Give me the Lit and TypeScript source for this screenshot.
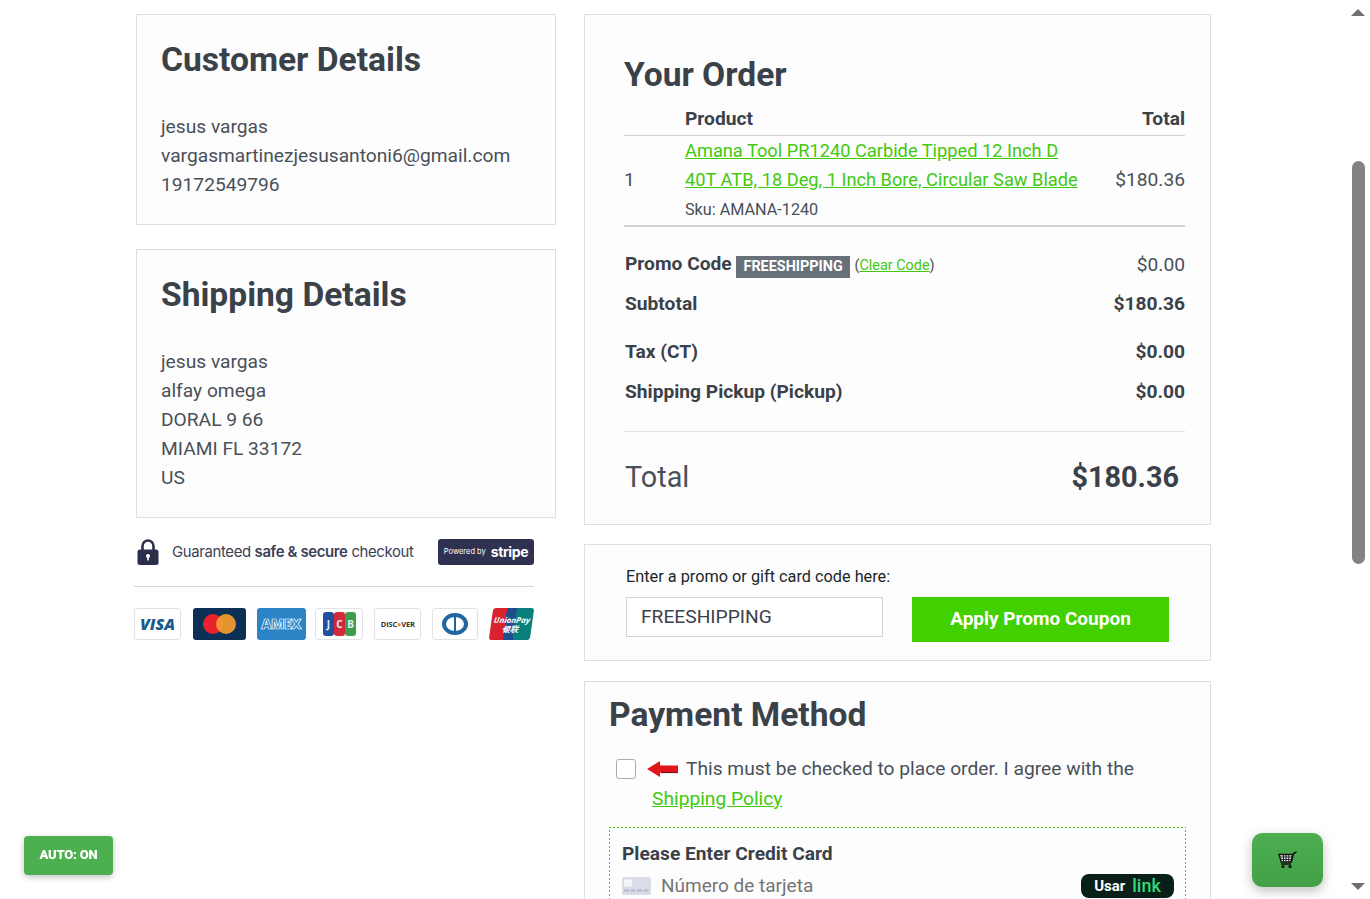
import { css, html, LitElement, svg } from 'lit';
import { customElement } from 'lit/decorators.js';

const customerLines = ['jesus vargas', 'vargasmartinezjesusantoni6@gmail.com', '19172549796'];
const shippingLines = ['jesus vargas', 'alfay omega', 'DORAL 9 66', 'MIAMI FL 33172', 'US'];

const lockIcon = svg`<svg width="24" height="28" viewBox="0 0 24 28">
  <path d="M6.5 13V8a5.5 5.5 0 0 1 11 0v5" fill="none" stroke="#2b2f4c" stroke-width="2.6"/>
  <rect x="1.500" y="11.500" width="21" height="15.500" rx="2.500" fill="#2b2f4c"/>
  <circle cx="12" cy="18" r="2" fill="#fff"/><rect x="11.200" y="18.500" width="1.600" height="4" fill="#fff"/>
</svg>`;

const cartIcon = svg`<svg width="20" height="18" viewBox="0 0 20 18">
  <path d="M1 3.500h13.500l-1.300 7.500H3.300z" fill="#eee" stroke="#111" stroke-width="1.400"/>
  <path d="M2 6h12M2.500 8.500h11M5.500 4v7M8 4v7M10.800 4v7" stroke="#111" stroke-width=".9"/>
  <path d="M13.200 11 15.500 2.500 18.500 1" fill="none" stroke="#111" stroke-width="1.500"/>
  <path d="M3 13h10" stroke="#111" stroke-width="1.500"/>
  <circle cx="5" cy="15.500" r="1.600" fill="#111"/><circle cx="12" cy="15.500" r="1.600" fill="#111"/>
</svg>`;

const arrowIcon = svg`<svg width="31" height="18" viewBox="0 0 31 18">
  <path d="M0 9 13 1v4.500h18v7H13V17z" fill="#e2141c"/>
  <path d="M14 12.500h17" stroke="#7c1015" stroke-width="1.200"/>
</svg>`;

const cardIcon = svg`<svg width="29" height="18" viewBox="0 0 29 18">
  <rect width="29" height="18" rx="1.500" fill="#d9dde8"/>
  <rect x="2" y="2.500" width="8" height="7" fill="#f2f4f8"/>
  <path d="M2 13.500h25" stroke="#b3b9c9" stroke-width="2" stroke-dasharray="5 1.500"/>
</svg>`;

@customElement('app-root')
export class AppRoot extends LitElement {
  static override styles = css`
    :host {
      display: block;
      height: 899px;
      overflow: hidden;
      background: #fff;
      font-family: Roboto, sans-serif;
      font-size: 19.200px;
      line-height: 28.800px;
      color: #495057;
    }
    a {
      color: #41c90e;
      text-decoration: underline;
    }
    h2 {
      margin: 0;
      font-size: 33.600px;
      line-height: 38px;
      font-weight: 700;
      color: #3b4148;
    }
    .page {
      display: flex;
      gap: 28px;
      padding: 14px 0 0 136px;
    }
    .left {
      width: 420px;
      display: flex;
      flex-direction: column;
      gap: 24px;
    }
    .right {
      width: 627px;
      display: flex;
      flex-direction: column;
    }
    .card {
      box-sizing: border-box;
      border: 1px solid #dcdfe3;
      background: #fdfdfe;
    }
    .details {
      padding: 26px 24px 25px;
    }
    .details h2 {
      margin-bottom: 34px;
    }
    .trust {
      width: 400px;
      margin: -7px 0 0 -2px;
    }
    .secure {
      display: flex;
      align-items: center;
      height: 28px;
      margin-top: 3px;
      padding-bottom: 20px;
      border-bottom: 1px solid #d5d7da;
      color: #3c3f55;
      font-family: Inter, sans-serif;
      font-size: 14.900px;
      letter-spacing: -0.35px;
    }
    .secure svg {
      margin: 0 12px 0 2px;
    }
    .secure b {
      font-weight: 600;
    }
    .stripe {
      margin-left: auto;
      width: 96px;
      height: 26px;
      display: flex;
      align-items: center;
      justify-content: center;
      gap: 5px;
      border-radius: 3px;
      background: #2f3150;
      color: #fff;
      font-size: 7.500px;
      letter-spacing: 0;
    }
    .stripe b {
      font-size: 14px;
      font-weight: 700;
      letter-spacing: -0.4px;
    }
    .brands {
      display: flex;
      justify-content: space-between;
      margin-top: 21px;
    }
    .brand {
      box-sizing: border-box;
      height: 32px;
      display: flex;
      align-items: center;
      justify-content: center;
      border: 1px solid #e0e2e6;
      border-radius: 3px;
      background: #fff;
      font-family: 'Open Sans', sans-serif;
    }
    .visa {
      width: 47px;
      color: #1a5a8e;
      font-size: 16px;
      font-weight: 800;
      font-style: italic;
    }
    .mc {
      width: 53px;
      margin-left: 1px;
      border: 0;
      background: #0b2f55;
    }
    .mc i {
      width: 20px;
      height: 20px;
      border-radius: 50%;
      background: #e8232c;
    }
    .mc i + i {
      margin-left: -7px;
      background: #f59e2c;
      opacity: 0.92;
    }
    .amex {
      width: 49px;
      border: 0;
      background: #2b84c6;
      color: #2b84c6;
      -webkit-text-stroke: 0.7px #fff;
      font-size: 14px;
      font-weight: 800;
      letter-spacing: -0.4px;
    }
    .jcb {
      width: 48px;
      margin-left: -1px;
      color: #e6eef5;
      font-size: 10px;
      font-weight: 700;
    }
    .jcb span {
      width: 11px;
      height: 24px;
      border-radius: 3px;
      line-height: 24px;
      text-align: center;
    }
    .jcb span:nth-child(1) { background: #20509e; }
    .jcb span:nth-child(2) { background: #d3283a; }
    .jcb span:nth-child(3) { background: #3b9f4a; }
    .discover {
      width: 47px;
      color: #333;
      font-size: 7.500px;
      font-weight: 700;
      letter-spacing: -0.2px;
    }
    .discover em {
      color: #f08a24;
      font-style: normal;
    }
    .diners {
      width: 46px;
    }
    .diners i {
      box-sizing: border-box;
      width: 26px;
      height: 22px;
      border: 4px solid #21669e;
      border-radius: 50%;
      background: linear-gradient(90deg, #fff 44%, #21669e 44% 56%, #fff 56%);
    }
    .union {
      width: 41px;
      margin: 0 2px;
      border: 0;
      color: #fff;
      font-size: 8px;
      line-height: 9px;
      font-weight: 700;
      font-style: italic;
      text-align: center;
      transform: skewX(-8deg);
      background: linear-gradient(90deg, #d8232f 0 34%, #1d4e8e 34% 58%, #087f7a 58%);
    }
    .order {
      height: 511px;
      padding: 41px 25px 0 39px;
    }
    .table-head {
      display: grid;
      grid-template-columns: 61px 1fr auto;
      align-items: center;
      box-sizing: border-box;
      height: 35px;
      margin-top: 7px;
      padding-top: 3px;
      border-bottom: 1px solid #cfd2d6;
      font-weight: 700;
      color: #3b4148;
    }
    .item {
      display: grid;
      grid-template-columns: 61px 1fr auto;
      align-items: center;
      height: 89px;
      border-bottom: 2px solid #cfd2d6;
    }
    .item a {
      font-size: 18.240px;
      line-height: 29px;
    }
    .links {
      margin-top: -2px;
      line-height: 29px;
    }
    .sku {
      margin-top: 1px;
      font-size: 16.200px;
      line-height: 29px;
    }
    .summary {
      display: flex;
      justify-content: space-between;
      align-items: center;
      height: 39px;
      padding-left: 1px;
    }
    .summary > span:first-child,
    .summary.strong {
      font-weight: 700;
      color: #3b4148;
    }
    .promo-row {
      margin: 19px 0 0;
    }
    .tag {
      display: inline-block;
      padding: 0 7px;
      background: #68717a;
      color: #fff;
      font-size: 14.400px;
      line-height: 22px;
      font-weight: 700;
      vertical-align: -1px;
    }
    .clear {
      font-size: 14.400px;
      font-weight: 400;
      color: #495057;
    }
    .tax {
      margin-top: 9px;
    }
    .shipping {
      margin-top: 1px;
    }
    .rule {
      height: 1px;
      margin-top: 19px;
      background: #dfe2e5;
    }
    .total {
      display: flex;
      justify-content: space-between;
      align-items: center;
      height: 90px;
      padding: 0 6px 0 1px;
      font-size: 28.800px;
    }
    .total b {
      color: #3b4148;
    }
    .promo {
      height: 117px;
      margin-top: 19px;
      padding: 18px 0 0 41px;
      font-size: 16.300px;
      color: #212529;
    }
    .promo-form {
      display: flex;
      align-items: flex-start;
      gap: 29px;
      margin-top: 5px;
    }
    .promo-input {
      box-sizing: border-box;
      width: 257px;
      height: 40px;
      padding: 0 14px;
      border: 1px solid #ced4da;
      background: #fff;
      color: #3b4148;
      font: 19.200px Roboto, sans-serif;
    }
    .promo-button {
      width: 257px;
      height: 45px;
      padding: 0 0 2px;
      border: 0;
      background: #42d000;
      color: #fff;
      font: 700 19px Roboto, sans-serif;
    }
    .payment {
      height: 260px;
      margin-top: 20px;
      padding: 14px 24px 0 24px;
    }
    .agree {
      display: flex;
      align-items: center;
      height: 30px;
      margin-top: 20px;
    }
    .check {
      box-sizing: border-box;
      width: 20px;
      height: 20px;
      margin: 0 11px 0 7px;
      border: 1px solid #a8adb2;
      border-radius: 3px;
      background: #fff;
    }
    .agree svg {
      margin-right: 8px;
    }
    .policy {
      height: 30px;
      padding-left: 43px;
      line-height: 30px;
    }
    .cc {
      --dash: #41d010;
      height: 120px;
      margin-top: 13px;
      padding: 13px 13px 0;
      background:
        repeating-linear-gradient(90deg, var(--dash) 0 2px, transparent 2px 4px) top / 100% 1px no-repeat,
        repeating-linear-gradient(0deg, var(--dash) 0 2px, transparent 2px 4px) left / 1px 100% no-repeat,
        repeating-linear-gradient(0deg, var(--dash) 0 2px, transparent 2px 4px) right / 1px 100% no-repeat;
    }
    .cc-title {
      font-weight: 700;
      line-height: 28px;
      color: #3b4148;
    }
    .cc-field {
      display: flex;
      align-items: center;
      gap: 10px;
      height: 26px;
      margin-top: 5px;
      color: #757575;
      font-size: 19px;
    }
    .usar {
      margin: 0 -1px 0 auto;
      width: 93px;
      height: 24px;
      display: flex;
      align-items: center;
      justify-content: center;
      gap: 7px;
      border-radius: 8px;
      background: #0a1f17;
      color: #fff;
      font-size: 15px;
      font-weight: 700;
    }
    .usar span {
      color: #33d97a;
      font-size: 18px;
      font-weight: 500;
    }
    .auto {
      position: fixed;
      left: 24px;
      top: 836px;
      width: 89px;
      height: 39px;
      display: flex;
      align-items: center;
      justify-content: center;
      border-radius: 4px;
      background: #4caf50;
      box-shadow: 0 2px 6px rgba(0, 0, 0, 0.25);
      color: #fff;
      font-size: 13px;
      font-weight: 900;
      letter-spacing: -0.2px;
    }
    .cart {
      position: fixed;
      left: 1252px;
      top: 833px;
      width: 71px;
      height: 54px;
      display: flex;
      align-items: center;
      justify-content: center;
      border-radius: 10px;
      background: linear-gradient(180deg, #4caf50, #43a047);
      box-shadow: 0 4px 12px rgba(0, 0, 0, 0.25);
    }
    .scrollbar {
      position: fixed;
      top: 0;
      right: 0;
      width: 17px;
      height: 899px;
      background: #fff;
    }
    .thumb {
      position: absolute;
      left: -1px;
      top: 161px;
      width: 13px;
      height: 403px;
      border-radius: 7px;
      background: #838383;
    }
    .up, .down {
      position: absolute;
      left: -2px;
      width: 0;
      height: 0;
      border-left: 7px solid transparent;
      border-right: 7px solid transparent;
    }
    .up {
      top: 9px;
      border-bottom: 7px solid #6f6f6f;
    }
    .down {
      top: 883px;
      border-top: 7px solid #6f6f6f;
    }
  `;

  override render() {
    return html`
      <div class="page">
        <div class="left">
          <section class="card details">
            <h2>Customer Details</h2>
            ${customerLines.map((l) => html`<div>${l}</div>`)}
          </section>
          <section class="card details">
            <h2>Shipping Details</h2>
            ${shippingLines.map((l) => html`<div>${l}</div>`)}
          </section>
          <div class="trust">
            <div class="secure">
              ${lockIcon}
              <span>Guaranteed <b>safe &amp; secure</b> checkout</span>
              <div class="stripe">Powered by <b>stripe</b></div>
            </div>
            <div class="brands">
              <div class="brand visa">VISA</div>
              <div class="brand mc"><i></i><i></i></div>
              <div class="brand amex">AMEX</div>
              <div class="brand jcb"><span>J</span><span>C</span><span>B</span></div>
              <div class="brand discover">DISC<em>●</em>VER</div>
              <div class="brand diners"><i></i></div>
              <div class="brand union">UnionPay<br />银联</div>
            </div>
          </div>
        </div>

        <div class="right">
          <section class="card order">
            <h2>Your Order</h2>
            <div class="table-head"><span></span><span>Product</span><span>Total</span></div>
            <div class="item">
              <span>1</span>
              <div class="links">
                <a href="#">Amana Tool PR1240 Carbide Tipped 12 Inch D<br />40T ATB, 18 Deg, 1 Inch Bore, Circular Saw Blade</a>
                <div class="sku">Sku: AMANA-1240</div>
              </div>
              <span>$180.36</span>
            </div>
            <div class="summary promo-row">
              <span>Promo Code <span class="tag">FREESHIPPING</span> <span class="clear">(<a href="#">Clear Code</a>)</span></span>
              <span>$0.00</span>
            </div>
            <div class="summary strong"><span>Subtotal</span><span>$180.36</span></div>
            <div class="summary strong tax"><span>Tax (CT)</span><span>$0.00</span></div>
            <div class="summary strong shipping"><span>Shipping Pickup (Pickup)</span><span>$0.00</span></div>
            <div class="rule"></div>
            <div class="total"><span>Total</span><b>$180.36</b></div>
          </section>

          <section class="card promo">
            <div>Enter a promo or gift card code here:</div>
            <div class="promo-form">
              <input class="promo-input" .value=${'FREESHIPPING'} />
              <button class="promo-button">Apply Promo Coupon</button>
            </div>
          </section>

          <section class="card payment">
            <h2>Payment Method</h2>
            <div class="agree">
              <div class="check"></div>
              ${arrowIcon}
              <span>This must be checked to place order. I agree with the</span>
            </div>
            <div class="policy"><a href="#">Shipping Policy</a></div>
            <div class="cc">
              <div class="cc-title">Please Enter Credit Card</div>
              <div class="cc-field">
                ${cardIcon}
                <span>Número de tarjeta</span>
                <div class="usar">Usar <span>link</span></div>
              </div>
            </div>
          </section>
        </div>
      </div>

      <div class="auto">AUTO: ON</div>
      <div class="cart">${cartIcon}</div>
      <div class="scrollbar">
        <div class="up"></div>
        <div class="thumb"></div>
        <div class="down"></div>
      </div>
    `;
  }
}

declare global {
  interface HTMLElementTagNameMap {
    'app-root': AppRoot;
  }
}
